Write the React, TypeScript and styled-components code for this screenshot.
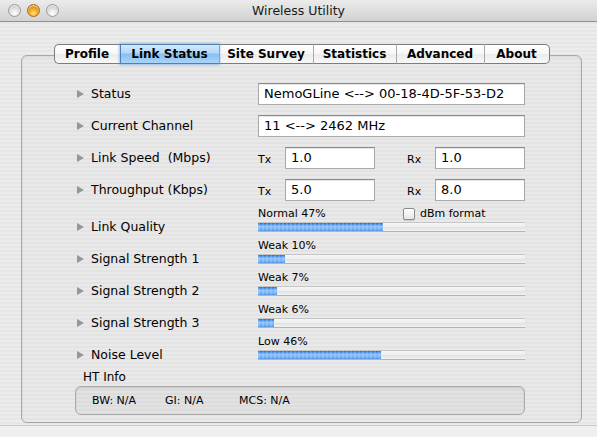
import React from "react";
import styled, { createGlobalStyle } from "styled-components";

const GlobalStyle = createGlobalStyle`
  html, body {
    margin: 0;
    padding: 0;
  }
  body {
    font-family: "DejaVu Sans", "Liberation Sans", sans-serif;
    background: #e9e9e9;
    color: #000;
  }
`;

const stripes = (a: string, b: string) =>
  `repeating-linear-gradient(180deg, ${a} 0px, ${a} 2px, ${b} 2px, ${b} 4px)`;

const Window = styled.div`
  width: 597px;
  height: 437px;
  display: flex;
  flex-direction: column;
  overflow: hidden;
  background: ${stripes("#ececec", "#e6e6e6")};
`;

const TitleBar = styled.div`
  height: 21px;
  border-bottom: 1px solid #8f8f8f;
  background: linear-gradient(#ebebeb, #d2d2d2);
  display: grid;
  grid-template-columns: 1fr auto 1fr;
  align-items: center;
`;

const Lights = styled.div`
  display: flex;
  gap: 6px;
  padding-left: 8px;
`;

const Light = styled.span<{ $color: "gray" | "orange" }>`
  width: 13px;
  height: 13px;
  border-radius: 50%;
  box-sizing: border-box;
  border: 1px solid ${(p) => (p.$color === "orange" ? "#a96a10" : "#9a9a9a")};
  background: ${(p) =>
    p.$color === "orange"
      ? "radial-gradient(circle at 50% 75%, #ffe27a 0%, #f7a41c 45%, #c86d00 100%)"
      : "radial-gradient(circle at 50% 75%, #ffffff 0%, #e2e2e2 45%, #b4b4b4 100%)"};
  box-shadow: inset 0 1px 1px rgba(255, 255, 255, 0.8);
`;

const Title = styled.div`
  font-size: 12.5px;
  color: #1a1a1a;
`;

const Body = styled.div`
  padding: 22px 15px 0 21px;
`;

const TabRow = styled.div`
  display: flex;
  justify-content: center;
  margin-bottom: -9px;
  position: relative;
  z-index: 1;
`;

const Tab = styled.div<{ $w: number; $active?: boolean; $first?: boolean; $last?: boolean }>`
  width: ${(p) => p.$w}px;
  height: 20px;
  box-sizing: border-box;
  border-top: 1px solid ${(p) => (p.$active ? "#4f7fb8" : "#7c7c7c")};
  border-bottom: 1px solid ${(p) => (p.$active ? "#4f7fb8" : "#7c7c7c")};
  border-left: 1px solid ${(p) => (p.$active ? "#4f7fb8" : p.$first ? "#7c7c7c" : "#a9a9a9")};
  border-right: ${(p) => (p.$last ? "1px solid #7c7c7c" : "none")};
  border-radius: ${(p) => (p.$first ? "5px 0 0 5px" : p.$last ? "0 5px 5px 0" : "0")};
  background: ${(p) =>
    p.$active
      ? "linear-gradient(#d4e9fc 0%, #b3d6f7 45%, #86c0f1 50%, #a9d4f8 100%)"
      : "linear-gradient(#ffffff 0%, #f7f7f7 50%, #ececec 52%, #f8f8f8 100%)"};
  box-shadow: ${(p) => (p.$active ? "0 0 2px 1px rgba(90, 150, 220, 0.55)" : "none")};
  font-weight: bold;
  font-size: 12px;
  line-height: 19px;
  text-align: center;
  position: relative;
  z-index: ${(p) => (p.$active ? 1 : 0)};
`;

const Panel = styled.div`
  height: 368px;
  box-sizing: border-box;
  border: 1px solid #a7a7a7;
  border-radius: 6px;
  background: ${stripes("#e9e9e9", "#e3e3e3")};
  box-shadow: inset 0 1px 2px rgba(0, 0, 0, 0.08);
  padding: 27px 0 7px 55px;
  display: flex;
  flex-direction: column;
`;

const FieldGroup = styled.div`
  display: flex;
  flex-direction: column;
  gap: 10px;
`;

const BarGroup = styled.div`
  margin-top: 6px;
  display: flex;
  flex-direction: column;
  gap: 7px;
`;

const Row = styled.div<{ $bar?: boolean }>`
  display: grid;
  grid-template-columns: 181px 267px;
  align-items: ${(p) => (p.$bar ? "end" : "center")};
  height: ${(p) => (p.$bar ? 25 : 22)}px;
`;

const Label = styled.div<{ $bar?: boolean }>`
  display: flex;
  align-items: center;
  gap: 7px;
  font-size: 12.5px;
  line-height: 16px;
  margin-bottom: ${(p) => (p.$bar ? -3 : 0)}px;
`;

const Arrow = styled.span`
  width: 0;
  height: 0;
  border-left: 7px solid #969696;
  border-top: 4.5px solid transparent;
  border-bottom: 4.5px solid transparent;
`;

const Field = styled.div`
  height: 22px;
  box-sizing: border-box;
  border: 1px solid #a9a9a9;
  border-top-color: #8a8a8a;
  background: #fff;
  box-shadow: inset 0 1px 1px rgba(0, 0, 0, 0.1);
  font-size: 13px;
  line-height: 20px;
  padding-left: 5px;
  white-space: nowrap;
  overflow: hidden;
`;

const Pair = styled.div`
  display: grid;
  grid-template-columns: 27px 90px 32px 28px 90px;
  align-items: center;
`;

const Small = styled.span`
  font-size: 11px;
  padding-top: 3px;
`;

const BarCol = styled.div`
  display: flex;
  flex-direction: column;
  gap: 1px;
`;

const Caption = styled.div`
  display: grid;
  grid-template-columns: 145px 1fr;
  align-items: center;
  height: 14px;
  font-size: 11px;
  line-height: 14px;
`;

const Check = styled.label`
  display: flex;
  align-items: center;
  gap: 5px;
  font-size: 11px;
`;

const CheckBox = styled.span`
  width: 12px;
  height: 12px;
  box-sizing: border-box;
  border: 1px solid #8a8a8a;
  border-radius: 2px;
  background: linear-gradient(#ffffff, #e6e6e6);
  box-shadow: 0 1px 1px rgba(0, 0, 0, 0.15);
`;

const Track = styled.div`
  height: 10px;
  box-sizing: border-box;
  border-top: 1px solid #c4c4c4;
  border-bottom: 1px solid #b3b3b3;
  background: linear-gradient(#f6f6f6, #ededed 50%, #e2e2e2 55%, #f3f3f3);
  overflow: hidden;
`;

const Fill = styled.div`
  height: 100%;
  background:
    repeating-linear-gradient(90deg, rgba(255, 255, 255, 0.14) 0px, rgba(255, 255, 255, 0.14) 2px, transparent 2px, transparent 4px),
    repeating-linear-gradient(180deg, rgba(30, 90, 220, 0.12) 0px, rgba(30, 90, 220, 0.12) 2px, transparent 2px, transparent 4px),
    linear-gradient(#2a62d8 0%, #4f92ee 15%, #8cc4f8 45%, #98cdfa 60%, #62a6f2 85%, #4a8fec 100%);
`;

const HtLabel = styled.div`
  margin-top: 10px;
  padding-left: 6px;
  font-size: 12px;
  line-height: 14px;
`;

const HtBox = styled.div`
  margin: 2px 0 0 -2px;
  width: 450px;
  height: 29px;
  box-sizing: border-box;
  border: 1px solid #a9a9a9;
  border-radius: 6px;
  background: ${stripes("#e2e2e2", "#dcdcdc")};
  box-shadow: inset 0 1px 2px rgba(0, 0, 0, 0.12);
  display: grid;
  grid-template-columns: 73px 74px auto;
  align-items: center;
  padding-left: 16px;
  font-size: 11px;
`;

const Footer = styled.div`
  margin-top: 2px;
  height: 12px;
  box-sizing: border-box;
  border-top: 1px solid #c8c8c8;
  background: #efefef;
`;

const tabs = [
  { name: "Profile", w: 66 },
  { name: "Link Status", w: 99, active: true },
  { name: "Site Survey", w: 94 },
  { name: "Statistics", w: 83 },
  { name: "Advanced", w: 88 },
  { name: "About", w: 66 },
];

const bars = [
  { label: "Link Quality", caption: "Normal 47%", value: 47, check: true },
  { label: "Signal Strength 1", caption: "Weak 10%", value: 10 },
  { label: "Signal Strength 2", caption: "Weak 7%", value: 7 },
  { label: "Signal Strength 3", caption: "Weak 6%", value: 6 },
  { label: "Noise Level", caption: "Low 46%", value: 46 },
];

const App = () => {
  return (
    <>
      <GlobalStyle />
      <Window>
        <TitleBar>
          <Lights>
            <Light $color="gray" />
            <Light $color="orange" />
            <Light $color="gray" />
          </Lights>
          <Title>Wireless Utility</Title>
          <div />
        </TitleBar>
        <Body>
          <TabRow>
            {tabs.map((t, i) => (
              <Tab
                key={t.name}
                $w={t.w}
                $active={t.active}
                $first={i === 0}
                $last={i === tabs.length - 1}
              >
                {t.name}
              </Tab>
            ))}
          </TabRow>
          <Panel>
            <FieldGroup>
              <Row>
                <Label>
                  <Arrow />
                  Status
                </Label>
                <Field>NemoGLine &lt;--&gt; 00-18-4D-5F-53-D2</Field>
              </Row>
              <Row>
                <Label>
                  <Arrow />
                  Current Channel
                </Label>
                <Field>11 &lt;--&gt; 2462 MHz</Field>
              </Row>
              <Row>
                <Label>
                  <Arrow />
                  Link Speed&nbsp; (Mbps)
                </Label>
                <Pair>
                  <Small>Tx</Small>
                  <Field>1.0</Field>
                  <span />
                  <Small>Rx</Small>
                  <Field>1.0</Field>
                </Pair>
              </Row>
              <Row>
                <Label>
                  <Arrow />
                  Throughput (Kbps)
                </Label>
                <Pair>
                  <Small>Tx</Small>
                  <Field>5.0</Field>
                  <span />
                  <Small>Rx</Small>
                  <Field>8.0</Field>
                </Pair>
              </Row>
            </FieldGroup>
            <BarGroup>
              {bars.map((b) => (
                <Row $bar key={b.label}>
                  <Label $bar>
                    <Arrow />
                    {b.label}
                  </Label>
                  <BarCol>
                    <Caption>
                      <span>{b.caption}</span>
                      {b.check && (
                        <Check>
                          <CheckBox />
                          dBm format
                        </Check>
                      )}
                    </Caption>
                    <Track>
                      <Fill style={{ width: `${b.value}%` }} />
                    </Track>
                  </BarCol>
                </Row>
              ))}
            </BarGroup>
            <HtLabel>HT Info</HtLabel>
            <HtBox>
              <span>BW: N/A</span>
              <span>GI: N/A</span>
              <span>MCS: N/A</span>
            </HtBox>
          </Panel>
        </Body>
        <Footer />
      </Window>
    </>
  );
};

export default App;
